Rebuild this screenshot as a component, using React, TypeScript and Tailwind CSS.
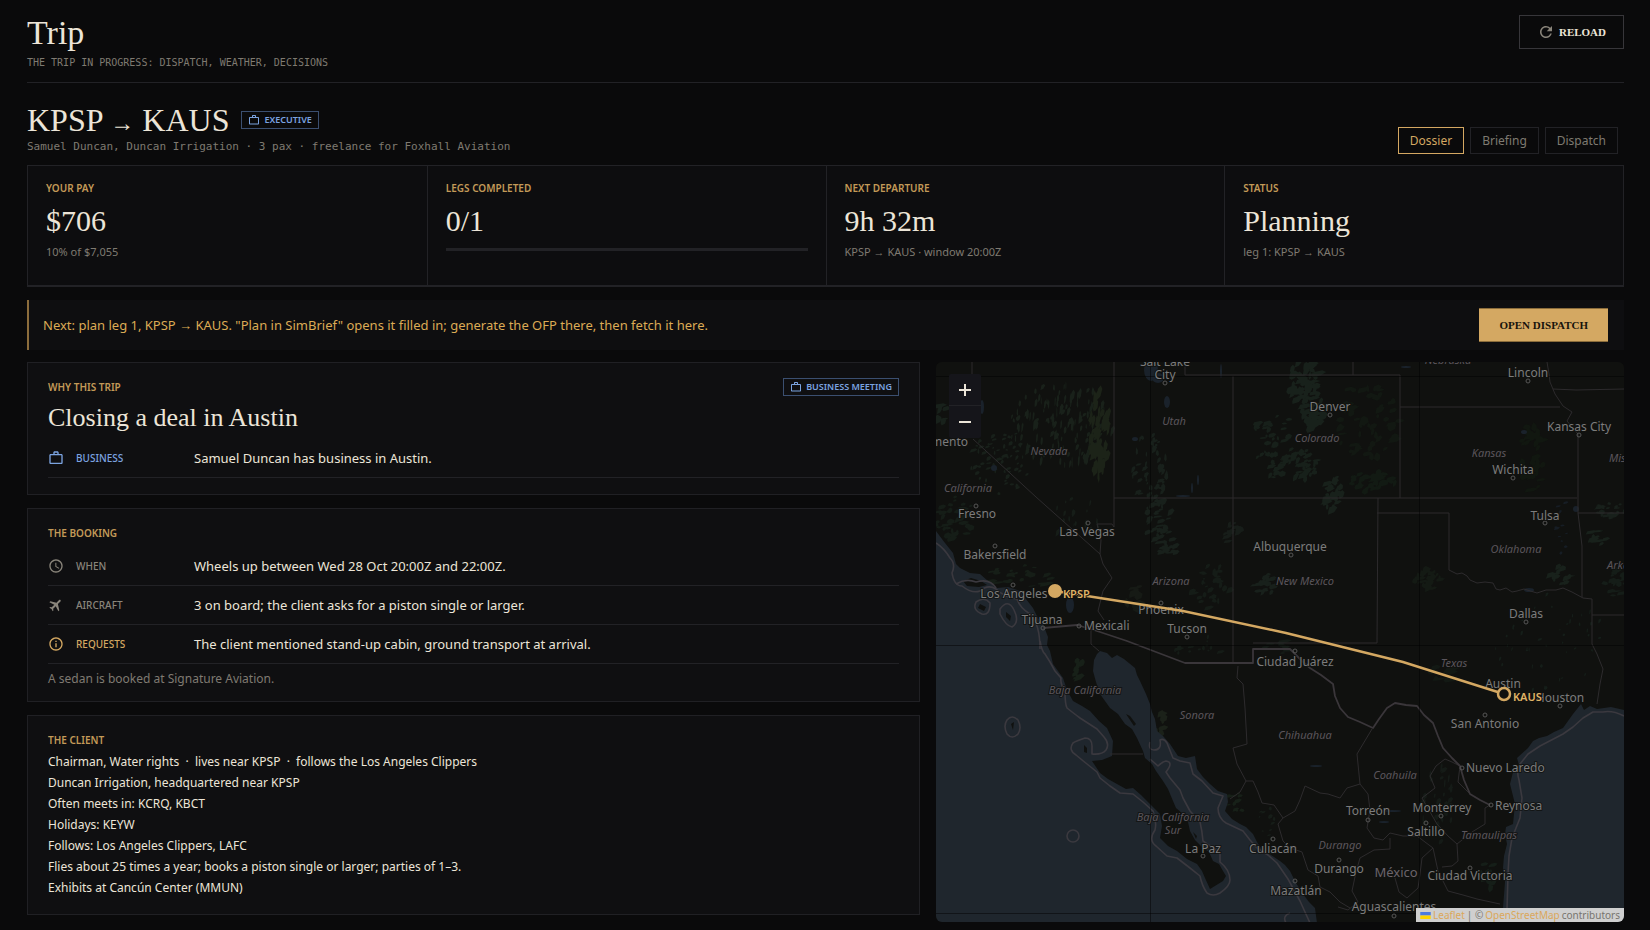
import type { ComponentType, ReactNode } from 'react';
import { MdFlight, MdInfoOutline, MdRefresh, MdSchedule, MdWorkOutline } from 'react-icons/md';

const SERIF = "font-['Liberation_Serif',serif]";
const MONO = "font-['DejaVu_Sans_Mono',monospace]";

type IconType = ComponentType<{ className?: string }>;

function Label({ children }: { children: ReactNode }) {
  return <h3 className="text-[10px] leading-4 font-semibold uppercase text-[#c39a58]">{children}</h3>;
}

function Tag({ children }: { children: ReactNode }) {
  return (
    <span className="inline-flex h-[18px] items-center gap-1 border border-[#3b4f70] px-1.5 text-[9px] leading-4 font-semibold uppercase text-[#7ba3e0]">
      <MdWorkOutline className="size-3" />
      {children}
    </span>
  );
}

function Stat({ label, value, sub }: { label: string; value: string; sub?: string }) {
  return (
    <div className="min-w-0 border-l border-[#222226] px-[18px] pt-[14px] first:border-l-0">
      <Label>{label}</Label>
      <p className={`mt-[7px] text-[30px] leading-9 text-[#ece5d8] ${SERIF}`}>{value}</p>
      {sub ? (
        <p className="mt-[5px] text-[11px] leading-4 text-[#7f7a71]">{sub}</p>
      ) : (
        <div className="mt-[9px] h-[3px] bg-[#222226]" />
      )}
    </div>
  );
}

function Card({ children, className = 'pb-4' }: { children: ReactNode; className?: string }) {
  return <section className={`border border-[#202024] bg-[#0f0f11] px-5 pt-4 ${className}`}>{children}</section>;
}

function Row({ icon: Icon, tone, label, text }: { icon: IconType; tone: string; label: string; text: string }) {
  return (
    <div className="flex items-center border-b border-[#222226] py-2">
      <span className={`flex w-[146px] shrink-0 items-center gap-3 text-[10px] leading-4 font-medium uppercase ${tone}`}>
        <Icon className="size-4" />
        {label}
      </span>
      <span className="text-[13px] leading-[22px] text-[#ece5d8]">{text}</span>
    </div>
  );
}

// x, y, label, anchor
type Place = [number, number, string, ('start' | 'middle' | 'end')?];

const CITIES: Place[] = [
  [229, 4, 'Salt Lake'],
  [229, 17, 'City'],
  [32, 84, 'Sacramento', 'end'],
  [41, 156, 'Fresno'],
  [151, 174, 'Las Vegas'],
  [59, 197, 'Bakersfield'],
  [78, 236, 'Los Angeles'],
  [106, 262, 'Tijuana'],
  [148, 268, 'Mexicali', 'start'],
  [225, 252, 'Phoenix'],
  [251, 271, 'Tucson'],
  [354, 189, 'Albuquerque'],
  [394, 49, 'Denver'],
  [592, 15, 'Lincoln'],
  [643, 69, 'Kansas City'],
  [577, 112, 'Wichita'],
  [609, 158, 'Tulsa'],
  [590, 256, 'Dallas'],
  [267, 491, 'La Paz'],
  [337, 491, 'Culiacán'],
  [360, 533, 'Mazatlán'],
  [359, 304, 'Ciudad Juárez'],
  [567, 326, 'Austin'],
  [624, 340, 'Houston'],
  [549, 366, 'San Antonio'],
  [530, 410, 'Nuevo Laredo', 'start'],
  [432, 453, 'Torreón'],
  [506, 450, 'Monterrey'],
  [559, 448, 'Reynosa', 'start'],
  [490, 474, 'Saltillo'],
  [403, 511, 'Durango'],
  [534, 518, 'Ciudad Victoria'],
  [458, 549, 'Aguascalientes'],
];

const REGIONS: Place[] = [
  [238, 63, 'Utah'],
  [113, 93, 'Nevada'],
  [32, 130, 'California'],
  [235, 223, 'Arizona'],
  [369, 223, 'New Mexico'],
  [381, 80, 'Colorado'],
  [512, 2, 'Nebraska'],
  [553, 95, 'Kansas'],
  [673, 100, 'Missouri', 'start'],
  [580, 191, 'Oklahoma'],
  [671, 207, 'Arkansas', 'start'],
  [149, 332, 'Baja California'],
  [261, 357, 'Sonora'],
  [237, 459, 'Baja California'],
  [237, 472, 'Sur'],
  [369, 377, 'Chihuahua'],
  [518, 305, 'Texas'],
  [459, 417, 'Coahuila'],
  [553, 477, 'Tamaulipas'],
  [404, 487, 'Durango'],
];

const DOTS = [
  [229, 21], [40, 144], [152, 161], [59, 184], [77, 223], [107, 266], [143, 264], [225, 241], [251, 275],
  [355, 193], [394, 53], [592, 19], [643, 73], [577, 116], [609, 161], [590, 260], [267, 494], [337, 477],
  [359, 519], [359, 289], [624, 344], [549, 353], [526, 406], [432, 458], [505, 454], [555, 443], [490, 461],
  [403, 498], [534, 506], [458, 554],
];

const PACIFIC =
  'M0 169L9 181L17 191L20 202L24 206L34 211L44 212L52 219L61 226L72 225L84 229L90 237L97 246L102 256L107 262L112 275L111 283L114 289L117 302L122 309L127 316L131 328L137 339L146 344L154 349L163 359L171 366L177 379L176 394L166 398L156 399L164 411L172 417L181 422L190 427L197 426L205 433L214 442L224 452L226 464L224 476L232 484L241 489L251 497L261 502L266 509L269 516L274 527L287 519L290 514L287 509L283 502L277 499L273 490L267 486L259 478L254 469L252 460L247 452L240 446L237 439L232 427L227 419L220 409L216 402L209 396L207 389L201 376L196 367L189 362L182 352L174 346L164 332L160 320L157 309L158 298L161 292L164 289L171 291L176 296L181 293L188 297L199 306L201 313L204 319L210 332L214 342L216 350L219 357L221 369L227 374L234 382L242 394L250 396L259 394L261 407L267 415L274 422L282 429L291 432L292 440L289 449L296 457L304 462L310 465L317 472L321 480L327 489L335 493L344 499L349 503L354 509L360 521L367 532L373 540L379 546L381 561H0Z';

const GULF =
  'M688 348L675 345L661 347L654 344L648 348L645 342L637 352L627 366L618 370L611 374L603 376L597 379L592 386L581 396L583 403L577 410L574 422L577 434L579 442L578 452L577 462L570 465L569 472L571 482L568 494L567 506L569 520L567 546V561H688Z';

const MARITIME = [
  'M0 181Q8 186 14 196Q20 202 16 211Q18 224 26 224Q36 232 44 229Q52 222 60 227Q70 236 81 237Q84 246 94 252Q104 262 104 287',
  'M104 279Q106 290 109 292L114 300L119 309L125 316Q124 322 129 329Q129 342 131 346Q136 350 144 356L161 367L168 375Q174 382 170 388Q166 393 156 392V384Q156 376 149 376Q140 379 137 381Q132 388 140 393L151 402L161 410L164 416L174 424L184 431L197 432L207 440L217 449Q221 460 219 468Q212 478 220 484L231 494L241 496L254 506L264 514Q266 524 271 531Q277 535 284 531Q294 524 294 518Q294 508 284 500L284 491L267 479Q266 468 264 460L254 449L247 436L244 428L234 416L230 410Q238 400 230 399Q226 400 222 404L214 397',
  'M214 380Q212 388 218 388Q226 388 224 378Q228 376 231 381L237 396L244 399L254 401L257 412L266 419L277 431L287 434L282 446Q282 456 290 461L307 469L314 478L321 486L332 493L341 501L352 517L364 539L374 561',
  'M688 354Q676 348 667 350L657 350L647 356L637 365L627 372L604 384L592 392L584 402Q580 408 583 418L586 436L584 456L576 476L573 494L572 512L571 548',
  'M71 358Q76 352 82 358Q86 366 82 372Q76 378 71 372Q67 364 71 358Z',
  'M131 474a6 6 0 1 0 12 0a6 6 0 1 0 -12 0Z',
  'M40 240Q48 234 54 241Q54 254 46 252Q36 248 40 240Z',
  'M64 247Q72 236 78 248Q84 260 76 265Q70 264 64 252Z',
  'M20 222Q30 216 40 220Q54 216 60 226',
  'M354 551Q346 554 350 561',
];

const STATES = [
  'M178 0V165L176 162H161L165 178L164 192',
  'M178 136H641',
  'M297 14V301',
  'M249 0V13H464V136',
  'M417 0V13',
  'M464 45H624',
  'M611 0L613 12L614 20L619 32L627 44L636 50L631 59L642 72V151H688',
  'M617 27L640 28L688 27',
  'M642 151L646 184V235',
  'M442 136L441 281H317',
  'M441 151H513V208L521 212L526 211L531 214L534 218L541 221L549 220L557 221L560 227L564 228L570 226L576 230L581 229L588 227L601 231L610 228L620 228L627 226L636 230L647 236L656 237V282L661 292L667 307L664 322L661 342',
  'M656 253H688',
  'M36 0V12',
  'M37 77L100 135L164 192L167 202L176 216L167 229L162 249L168 258',
  'M155 266V282L163 289',
  'M174 392H207',
  'M302 304L301 316L307 322L309 346L311 382L297 386L301 402L310 419L304 430L294 437',
  'M310 419L317 419L322 430L326 441L338 443L347 456L342 462L347 479L354 486L366 490L372 508L382 514L384 525L394 530L404 540L414 546',
  'M436 367L421 392L424 422L411 426L404 436L392 432L384 431L369 424L364 438L359 449L347 456',
  'M424 422L432 432L434 448L431 466L438 476L447 478L454 471L467 474L481 474L497 486L502 509L512 529L527 533L541 537L564 542',
  'M524 404L516 400L509 397L500 404L494 414L499 426L486 436L501 462L512 474L521 482L522 499L516 504L506 505',
  'M524 404L522 420L534 432',
  'M554 443L549 446V462L536 470L521 482',
  'M454 476V487L438 488L424 496L420 510L416 529L422 540L412 548L402 545',
  'M497 486L486 496L484 512L482 526L471 536L463 530L459 516',
];

const BORDER =
  'M107 266L141 263L161 269L191 279L249 301H317V287H354L366 299L374 306L385 313L397 322L399 334L404 346L412 355L424 360L437 366L443 357L451 346L459 341L470 343L481 344L488 353L497 361L502 374L507 386L516 396L524 404L528 418L534 432L544 438L554 443';

// cx, cy, spread x, spread y, count, patch width, patch height, fill
const WOODS: [number, number, number, number, number, number, number, string][] = [
  [125, 62, 52, 42, 150, 2, 9, '#19211a'],
  [163, 72, 10, 42, 60, 4, 12, '#1c2318'],
  [65, 100, 32, 34, 70, 3, 4, '#18201a'],
  [18, 155, 20, 22, 40, 6, 5, '#151d17'],
  [4, 55, 8, 12, 8, 6, 7, '#18211b'],
  [85, 215, 34, 12, 30, 6, 4, '#161e17'],
  [140, 160, 24, 24, 18, 2, 7, '#161d18'],
  [213, 105, 20, 34, 50, 3, 6, '#18201b'],
  [222, 158, 14, 20, 34, 5, 6, '#18201b'],
  [232, 185, 12, 8, 16, 6, 5, '#18201b'],
  [276, 225, 22, 22, 30, 5, 5, '#151c17'],
  [200, 236, 10, 12, 10, 10, 8, '#161a15'],
  [298, 170, 10, 14, 14, 5, 6, '#171d19'],
  [330, 222, 12, 10, 16, 6, 5, '#18201b'],
  [336, 78, 20, 40, 46, 5, 5, '#17201a'],
  [368, 20, 16, 22, 50, 6, 7, '#18211b'],
  [378, 50, 12, 18, 34, 6, 7, '#18211b'],
  [364, 102, 18, 16, 44, 5, 6, '#17201a'],
  [397, 134, 9, 20, 28, 5, 7, '#18211b'],
  [430, 60, 34, 40, 60, 6, 7, '#121812'],
  [436, 120, 24, 10, 30, 7, 6, '#121a13'],
  [596, 95, 12, 34, 30, 6, 8, '#111710'],
  [623, 214, 10, 10, 18, 5, 5, '#18211b'],
  [625, 165, 8, 30, 14, 3, 3, '#161d24'],
  [675, 148, 16, 8, 18, 5, 4, '#18201b'],
  [678, 220, 12, 14, 18, 5, 5, '#151d18'],
  [660, 175, 10, 8, 8, 6, 5, '#18211b'],
  [492, 218, 14, 12, 28, 5, 6, '#141a14'],
  [505, 312, 12, 8, 8, 8, 5, '#131914'],
  [610, 280, 60, 50, 44, 2, 4, '#151e19'],
  [142, 308, 5, 10, 12, 4, 6, '#172018'],
  [222, 360, 7, 12, 8, 6, 6, '#1b2119'],
  [502, 445, 16, 40, 30, 3, 8, '#151b17'],
  [552, 513, 7, 14, 12, 5, 8, '#151e18'],
  [300, 440, 12, 10, 10, 4, 4, '#172018'],
  [330, 470, 10, 26, 16, 3, 4, '#161d18'],
  [340, 286, 12, 8, 10, 6, 4, '#151c17'],
  [260, 285, 26, 12, 14, 4, 4, '#151c17'],
];

const LAKES: [number, number, number, number][] = [
  [215, 8, 7, 11], [222, 16, 6, 5], [231, 40, 3, 6], [199, 77, 3, 2], [134, 243, 4, 8], [46, 45, 2, 7],
  [58, 106, 3, 3], [247, 134, 7, 1], [256, 126, 1, 5], [262, 118, 1, 5], [470, 5, 5, 1], [285, 9, 1, 7],
  [588, 70, 3, 2], [640, 147, 3, 3], [593, 228, 5, 2], [456, 449, 9, 1], [448, 460, 5, 1], [380, 404, 6, 1],
];

function noise(seed: number) {
  const v = Math.sin(seed * 127.1 + 311.7) * 43758.5453;
  return v - Math.floor(v);
}

function woodPath(index: number) {
  const [cx, cy, sx, sy, count, w, h] = WOODS[index];
  let d = '';
  for (let i = 0; i < count; i++) {
    const s = index * 1000 + i * 7;
    const angle = noise(s) * Math.PI * 2;
    const dist = Math.sqrt(noise(s + 1));
    const x = cx + Math.cos(angle) * dist * sx;
    const y = cy + Math.sin(angle) * dist * sy;
    const pw = w * (0.4 + noise(s + 2));
    const ph = h * (0.4 + noise(s + 3));
    const lean = pw * (noise(s + 4) - 0.2);
    d += `M${x + lean} ${y - ph / 2}L${x + pw / 2 + lean} ${y - ph / 4}L${x + pw / 2} ${y + ph / 4}L${x - lean} ${y + ph / 2}L${x - pw / 2} ${y + ph / 5}L${x - pw / 3} ${y - ph / 4}Z`;
  }
  return d;
}

function RouteMap() {
  return (
    <svg
      viewBox="0 0 688 560"
      preserveAspectRatio="xMidYMid slice"
      className="block h-full w-full font-['Noto_Sans',sans-serif]"
      role="img"
      aria-label="Route map from KPSP to KAUS"
    >
      <rect width="688" height="560" fill="#10110f" />
      {WOODS.map((w, i) => (
        <path key={i} d={woodPath(i)} fill={w[7]} />
      ))}
      {LAKES.map(([x, y, rx, ry], i) => (
        <ellipse key={i} cx={x} cy={y} rx={rx} ry={ry} fill="#1a222b" />
      ))}
      <g fill="#1f262d">
        <path d={PACIFIC} />
        <path d={GULF} />
      </g>
      <g fill="#10110f">
        <path d="M27 219l8-3l10 3l6 4l-8 2l-12-1zM44 242l6 3l-2 4l-6-3zM70 250l5 4l-1 5l-4-4zM75 362l3-2l-1 8zM148 383l3 3v5l-3-1zM190 352l4 2l6 8l-2 2zM257 470l4 4l-1 3z" />
      </g>
      <g fill="none" strokeLinejoin="round">
        <g stroke="#3b393f" strokeWidth="1.6">
          {MARITIME.map((d) => (
            <path key={d} d={d} />
          ))}
        </g>
        <g stroke="#2d2b2d" strokeWidth="1">
          {STATES.map((d) => (
            <path key={d} d={d} />
          ))}
        </g>
        <path d={BORDER} stroke="#3a363a" strokeWidth="1.8" />
        <path d="M214.500 0V560M483.500 0V560M0 14.500H688M0 283.500H688M0 551.500H688" stroke="#000" strokeOpacity="0.45" />
        <g stroke="#555" strokeWidth="1">
          {DOTS.map(([x, y]) => (
            <circle key={`${x}-${y}`} cx={x} cy={y} r="2" />
          ))}
        </g>
      </g>
      <g stroke="#10110f" strokeWidth="2" strokeOpacity="0.8" style={{ paintOrder: 'stroke' }}>
        <g fill="#5b555b" fontSize="11" fontStyle="italic">
          {REGIONS.map(([x, y, name, anchor = 'middle']) => (
            <text key={`${name}-${y}`} x={x} y={y} textAnchor={anchor}>
              {name}
            </text>
          ))}
        </g>
        <g fill="#7c7c7c" fontSize="12">
          {CITIES.map(([x, y, name, anchor = 'middle']) => (
            <text key={name} x={x} y={y} textAnchor={anchor}>
              {name}
            </text>
          ))}
        </g>
        <text x="460" y="515" textAnchor="middle" fontSize="13" fill="#6b646b">
          México
        </text>
      </g>
      <path d="M119 229L247 249L350 271L467 300L568 332" fill="none" stroke="#d4a862" strokeWidth="2.500" />
      <circle cx="119" cy="229" r="7" fill="#d4a862" />
      <circle cx="568" cy="332" r="6" fill="#10110f" stroke="#d4a862" strokeWidth="2.500" />
      <g fill="#e0b467" fontSize="11" fontWeight="600" stroke="#10110f" strokeWidth="2" style={{ paintOrder: 'stroke' }}>
        <text x="127" y="236">KPSP</text>
        <text x="577" y="339">KAUS</text>
      </g>
    </svg>
  );
}

function ZoomControl() {
  return (
    <div className="absolute top-3 left-[13px] flex w-8 flex-col overflow-hidden rounded-xs bg-[#15151a]">
      <button type="button" aria-label="Zoom in" className="flex h-8 items-center justify-center border-b border-[#222226] text-[#ece5d8]">
        <svg viewBox="0 0 14 14" className="size-[14px]" stroke="currentColor" strokeWidth="2">
          <path d="M7 1V13M1 7H13" />
        </svg>
      </button>
      <button type="button" aria-label="Zoom out" className="flex h-8 items-center justify-center text-[#ece5d8]">
        <svg viewBox="0 0 14 14" className="size-[14px]" stroke="currentColor" strokeWidth="2">
          <path d="M1 7H13" />
        </svg>
      </button>
    </div>
  );
}

const CLIENT_NOTES = [
  'Chairman, Water rights \u00a0·\u00a0 lives near KPSP \u00a0·\u00a0 follows the Los Angeles Clippers',
  'Duncan Irrigation, headquartered near KPSP',
  'Often meets in: KCRQ, KBCT',
  'Holidays: KEYW',
  'Follows: Los Angeles Clippers, LAFC',
  'Flies about 25 times a year; books a piston single or larger; parties of 1–3.',
  'Exhibits at Cancún Center (MMUN)',
];

const TABS = ['Dossier', 'Briefing', 'Dispatch'];

export default function App() {
  return (
    <div className="min-h-screen bg-[#0a0a0b] pt-[15px] pr-[26px] pb-2 pl-[27px] font-['Noto_Sans',sans-serif] text-[#ece5d8]">
      <header className="flex items-start justify-between border-b border-[#222226] pb-[11px]">
        <div>
          <h1 className={`text-[34px] leading-9 ${SERIF}`}>Trip</h1>
          <p className={`mt-1 text-[10px] leading-4 uppercase text-[#7f7a71] ${MONO}`}>
            The trip in progress: dispatch, weather, decisions
          </p>
        </div>
        <button type="button" className={`flex h-[34px] items-center gap-1 border border-[#37363a] px-[17px] text-[11px] font-bold uppercase ${SERIF}`}>
          <MdRefresh className="size-[18px] text-[#8a857b]" />
          Reload
        </button>
      </header>

      <div className="mt-[19px] flex items-end justify-between">
        <div>
          <div className="flex h-9 items-center gap-3">
            <h2 className={`text-[32px] leading-9 ${SERIF}`}>
              KPSP <span className="text-[24px] leading-none">→</span> KAUS
            </h2>
            <Tag>Executive</Tag>
          </div>
          <p className={`mt-px text-[11px] leading-4 text-[#7f7a71] ${MONO}`}>
            Samuel Duncan, Duncan Irrigation · 3 pax · freelance for Foxhall Aviation
          </p>
        </div>
        <nav className="mr-1.5 mb-px flex gap-1.5">
          {TABS.map((tab, i) => (
            <button
              key={tab}
              type="button"
              className={`h-[27px] border px-[11px] text-[12px] leading-5 ${i === 0 ? 'border-[#d4a862] text-[#d4a862]' : 'border-[#222226] text-[#7f7a71]'}`}
            >
              {tab}
            </button>
          ))}
        </nav>
      </div>

      <div className="mt-[10px] grid h-[122px] grid-cols-4 border border-b-2 border-[#222226] bg-[#0d0d0f]">
        <Stat label="Your pay" value="$706" sub="10% of $7,055" />
        <Stat label="Legs completed" value="0/1" />
        <Stat label="Next departure" value="9h 32m" sub="KPSP → KAUS · window 20:00Z" />
        <Stat label="Status" value="Planning" sub="leg 1: KPSP → KAUS" />
      </div>

      <div className="mt-[13px] flex items-center justify-between border-l-2 border-[#8c6d3c] bg-[#0e0e10] py-2 pr-4 pl-[14px]">
        <p className="text-[13px] leading-5 text-[#dcab55]">
          Next: plan leg 1, KPSP → KAUS. "Plan in SimBrief" opens it filled in; generate the OFP there, then fetch it here.
        </p>
        <button type="button" className={`h-[34px] border-y border-[#8c6d3c] bg-[#d4a862] px-5 text-[11px] font-semibold uppercase text-[#17130c] ${SERIF}`}>
          Open Dispatch
        </button>
      </div>

      <main className="mt-3 grid grid-cols-[893fr_688fr] items-start gap-4">
        <div className="flex flex-col gap-[13px]">
          <Card>
            <div className="flex items-start justify-between">
              <Label>Why this trip</Label>
              <div className="flex h-4 items-center">
                <Tag>Business meeting</Tag>
              </div>
            </div>
            <h2 className={`mt-[7px] text-[26px] leading-8 ${SERIF}`}>Closing a deal in Austin</h2>
            <div className="mt-[5px]">
              <Row icon={MdWorkOutline} tone="text-[#7ba3e0]" label="Business" text="Samuel Duncan has business in Austin." />
            </div>
          </Card>

          <Card className="pb-3">
            <Label>The booking</Label>
            <div className="mt-1.5">
              <Row icon={MdSchedule} tone="text-[#8a857b]" label="When" text="Wheels up between Wed 28 Oct 20:00Z and 22:00Z." />
              <Row
                icon={({ className }) => <MdFlight className={`rotate-45 ${className}`} />}
                tone="text-[#8a857b]"
                label="Aircraft"
                text="3 on board; the client asks for a piston single or larger."
              />
              <Row icon={MdInfoOutline} tone="text-[#d4a862]" label="Requests" text="The client mentioned stand-up cabin, ground transport at arrival." />
            </div>
            <p className="mt-[5px] text-[12px] leading-5 text-[#7f7a71]">A sedan is booked at Signature Aviation.</p>
          </Card>

          <Card>
            <Label>The client</Label>
            <div className="mt-[3px] text-[12px] leading-[21px]">
              {CLIENT_NOTES.map((note) => (
                <p key={note}>{note}</p>
              ))}
            </div>
          </Card>
        </div>

        <div className="relative h-[560px] overflow-hidden rounded-md bg-[#10110f]">
          <RouteMap />
          <ZoomControl />
          <div className="absolute right-0 bottom-0 flex h-[14px] items-center gap-0.5 bg-[#cfcfcf] px-1 text-[10px] leading-[14px] text-[#77746e]">
            <svg viewBox="0 0 12 8" className="h-[7px] w-[11px]">
              <path fill="#4c7be1" d="M0 0h12v4H0z" />
              <path fill="#ffd500" d="M0 4h12v4H0z" />
            </svg>
            <a href="#leaflet" className="text-[#dba75a]">Leaflet</a>
            <span>| ©</span>
            <a href="#osm" className="text-[#dba75a]">OpenStreetMap</a>
            <span>contributors</span>
          </div>
        </div>
      </main>
    </div>
  );
}
